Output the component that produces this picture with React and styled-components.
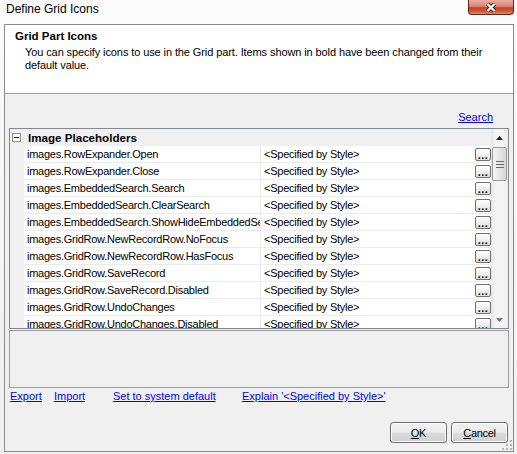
import styled, { createGlobalStyle } from "styled-components";

const GlobalStyle = createGlobalStyle`
  html, body {
    margin: 0;
    padding: 0;
  }
  body {
    font-family: "Liberation Sans", Arial, sans-serif;
    background: #f3f3f3;
    color: #000;
  }
`;

const rows = [
  "images.RowExpander.Open",
  "images.RowExpander.Close",
  "images.EmbeddedSearch.Search",
  "images.EmbeddedSearch.ClearSearch",
  "images.EmbeddedSearch.ShowHideEmbeddedSearch",
  "images.GridRow.NewRecordRow.NoFocus",
  "images.GridRow.NewRecordRow.HasFocus",
  "images.GridRow.SaveRecord",
  "images.GridRow.SaveRecord.Disabled",
  "images.GridRow.UndoChanges",
  "images.GridRow.UndoChanges.Disabled",
  "images.GridRow.DeleteRecord",
];

export default function App() {
  return (
    <>
      <GlobalStyle />
      <Window>
        <TitleBar>
          <Title>Define Grid Icons</Title>
          <CloseButton>
            <svg width="14" height="11" viewBox="0 0 14 11">
              <path d="M3.5 2 L10.5 9 M10.5 2 L3.5 9" stroke="#4b1b14" strokeWidth="4.2" />
              <path d="M3.5 2 L10.5 9 M10.5 2 L3.5 9" stroke="#fff" strokeWidth="2.2" />
            </svg>
          </CloseButton>
        </TitleBar>
        <Frame>
          <Header>
            <HeaderTitle>Grid Part Icons</HeaderTitle>
            <HeaderText>
              You can specify icons to use in the Grid part. Items shown in bold have been changed from their
              default value.
            </HeaderText>
          </Header>
          <Body>
            <SearchRow>
              <Link>Search</Link>
            </SearchRow>
            <Grid>
              <RowsArea>
                <Category>
                  <Toggle />
                  <CategoryLabel>Image Placeholders</CategoryLabel>
                </Category>
                {rows.map((name) => (
                  <Row key={name}>
                    <MarginCell />
                    <NameCell>{name}</NameCell>
                    <ValueCell>
                      <span>&lt;Specified by Style&gt;</span>
                      <EllipsisButton>...</EllipsisButton>
                    </ValueCell>
                  </Row>
                ))}
              </RowsArea>
              <ScrollBar>
                <ScrollArrow>
                  <svg width="7" height="4" viewBox="0 0 7 4">
                    <path d="M0 4 L3.5 0 L7 4 Z" fill="#222" />
                  </svg>
                </ScrollArrow>
                <Thumb>
                  <svg width="8" height="7" viewBox="0 0 8 7">
                    <path d="M0 0.5 H8 M0 3.5 H8 M0 6.5 H8" stroke="#6a6a6a" strokeWidth="1" />
                  </svg>
                </Thumb>
                <Track />
                <ScrollArrow>
                  <svg width="7" height="4" viewBox="0 0 7 4">
                    <path d="M0 0 L7 0 L3.5 4 Z" fill="#777" />
                  </svg>
                </ScrollArrow>
              </ScrollBar>
            </Grid>
            <DescriptionBox />
            <LinksRow>
              <Link>Export</Link>
              <Link>Import</Link>
              <Link>Set to system default</Link>
              <Link>Explain '&lt;Specified by Style&gt;'</Link>
            </LinksRow>
            <ButtonRow>
              <DialogButton>
                <u>O</u>K
              </DialogButton>
              <DialogButton>
                <u>C</u>ancel
              </DialogButton>
            </ButtonRow>
            <ResizeGrip>
              <svg width="10" height="10" viewBox="0 0 10 10">
                <g fill="#b4b4b4">
                  <rect x="8" y="0" width="2" height="2" />
                  <rect x="8" y="4" width="2" height="2" />
                  <rect x="4" y="4" width="2" height="2" />
                  <rect x="8" y="8" width="2" height="2" />
                  <rect x="4" y="8" width="2" height="2" />
                  <rect x="0" y="8" width="2" height="2" />
                </g>
              </svg>
            </ResizeGrip>
          </Body>
        </Frame>
      </Window>
    </>
  );
}

const Window = styled.div`
  width: 517px;
  height: 454px;
  display: flex;
  flex-direction: column;
  background: linear-gradient(to bottom, #fbfbfb, #f0f0f0);
  overflow: hidden;
`;

const TitleBar = styled.div`
  height: 24px;
  flex-shrink: 0;
  display: flex;
  justify-content: space-between;
  align-items: flex-start;
`;

const Title = styled.div`
  font-size: 12px;
  line-height: 15px;
  padding: 2px 0 0 6px;
`;

const CloseButton = styled.div`
  width: 46px;
  height: 15px;
  margin-right: 3px;
  box-sizing: border-box;
  border: 1px solid #6b2419;
  border-top: none;
  border-radius: 0 0 4px 4px;
  background: linear-gradient(
    to bottom,
    #e9ad9f 0%,
    #d98570 45%,
    #c7422b 55%,
    #cf553c 80%,
    #e08a6e 100%
  );
  display: flex;
  align-items: center;
  justify-content: center;
`;

const Frame = styled.div`
  flex: 1;
  margin: 0 3px 2px 4px;
  border: 1px solid #8a8a8a;
  display: flex;
  flex-direction: column;
`;

const Header = styled.div`
  height: 69px;
  box-sizing: border-box;
  flex-shrink: 0;
  background: #fff;
  border-bottom: 1px solid #a0a0a0;
  padding: 5px 10px 0;
`;

const HeaderTitle = styled.div`
  font-size: 11.5px;
  font-weight: bold;
  line-height: 13px;
`;

const HeaderText = styled.div`
  margin-top: 3px;
  padding-left: 10px;
  width: 480px;
  font-size: 11px;
  line-height: 13px;
  letter-spacing: -0.1px;
`;

const Body = styled.div`
  flex: 1;
  position: relative;
  background: #f0f0f0;
  padding: 0 4px 8px;
  display: flex;
  flex-direction: column;
`;

const SearchRow = styled.div`
  display: flex;
  justify-content: flex-end;
  padding: 17px 16px 4px 0;
`;

const Link = styled.a`
  color: #0000ff;
  text-decoration: underline;
  font-size: 11px;
  line-height: 13px;
  cursor: pointer;
  justify-self: start;
  white-space: nowrap;
`;

const Grid = styled.div`
  height: 201px;
  box-sizing: border-box;
  flex-shrink: 0;
  border: 1px solid #828790;
  background: #fff;
  display: flex;
  overflow: hidden;
`;

const RowsArea = styled.div`
  flex: 1;
  overflow: hidden;
  display: flex;
  flex-direction: column;
`;

const Category = styled.div`
  height: 17px;
  flex-shrink: 0;
  background: #f0f0f0;
  display: flex;
  align-items: center;
  padding-bottom: 1px;
  box-sizing: border-box;
`;

const Toggle = styled.div`
  position: relative;
  width: 9px;
  height: 9px;
  box-sizing: border-box;
  margin: 1px 7px 0 2px;
  border: 1px solid #919191;
  background: #fff;

  &::after {
    content: "";
    position: absolute;
    left: 1px;
    right: 1px;
    top: 3px;
    height: 1px;
    background: #222;
  }
`;

const CategoryLabel = styled.span`
  font-size: 11.6px;
  font-weight: bold;
`;

const Row = styled.div`
  height: 17px;
  flex-shrink: 0;
  display: flex;
  font-size: 11px;
  line-height: 16px;
  letter-spacing: -0.25px;
`;

const MarginCell = styled.div`
  width: 14px;
  flex-shrink: 0;
  background: #f0f0f0;
`;

const NameCell = styled.div`
  width: 237px;
  flex-shrink: 0;
  box-sizing: border-box;
  padding-left: 3px;
  border-right: 1px solid #ececec;
  border-bottom: 1px solid #ececec;
  white-space: nowrap;
  overflow: hidden;
`;

const ValueCell = styled.div`
  flex: 1;
  display: flex;
  justify-content: space-between;
  align-items: flex-start;
  padding-left: 3px;
  border-bottom: 1px solid #ececec;
  white-space: nowrap;
`;

const EllipsisButton = styled.div`
  width: 16px;
  height: 13px;
  margin-top: 2px;
  box-sizing: border-box;
  border: 1px solid #6f6f6f;
  border-radius: 2px;
  background: linear-gradient(to bottom, #ffffff, #e0e0e0);
  font-size: 11px;
  font-weight: bold;
  line-height: 13px;
  letter-spacing: 0.5px;
  text-align: center;
  overflow: hidden;
`;

const ScrollBar = styled.div`
  width: 17px;
  flex-shrink: 0;
  display: flex;
  flex-direction: column;
  background: linear-gradient(to right, #e6e6e6, #f4f4f4 25%, #f4f4f4 75%, #ececec);
`;

const ScrollArrow = styled.div`
  height: 17px;
  flex-shrink: 0;
  display: flex;
  align-items: center;
  justify-content: center;
`;

const Thumb = styled.div`
  height: 34px;
  margin: 1px 1px 0;
  box-sizing: border-box;
  border: 1px solid #9b9b9b;
  border-radius: 2px;
  background: linear-gradient(to right, #f4f4f4, #e7e7e7 50%, #d8d8d8);
  display: flex;
  align-items: center;
  justify-content: center;
`;

const Track = styled.div`
  flex: 1;
`;

const DescriptionBox = styled.div`
  margin-top: 1px;
  height: 58px;
  flex-shrink: 0;
  box-sizing: border-box;
  border: 1px solid #9a9a9a;
  background: #f0f0f0;
`;

const LinksRow = styled.div`
  display: grid;
  grid-template-columns: 44px 59px 129px auto;
  margin-top: 2px;
  padding-left: 1px;
`;

const ButtonRow = styled.div`
  display: flex;
  justify-content: flex-end;
  gap: 4px;
  margin-top: 19px;
  padding-right: 1px;
`;

const DialogButton = styled.button`
  width: 57px;
  height: 21px;
  box-sizing: border-box;
  padding: 0;
  border: 1px solid #707070;
  border-radius: 3px;
  background: linear-gradient(to bottom, #f2f2f2 0%, #ebebeb 48%, #dddddd 52%, #cfcfcf 100%);
  box-shadow: inset 0 0 0 1px #fbfbfb;
  font-family: inherit;
  font-size: 11px;
  letter-spacing: -0.3px;
  color: #000;
`;

const ResizeGrip = styled.div`
  position: absolute;
  right: 1px;
  bottom: 1px;
  line-height: 0;
`;
